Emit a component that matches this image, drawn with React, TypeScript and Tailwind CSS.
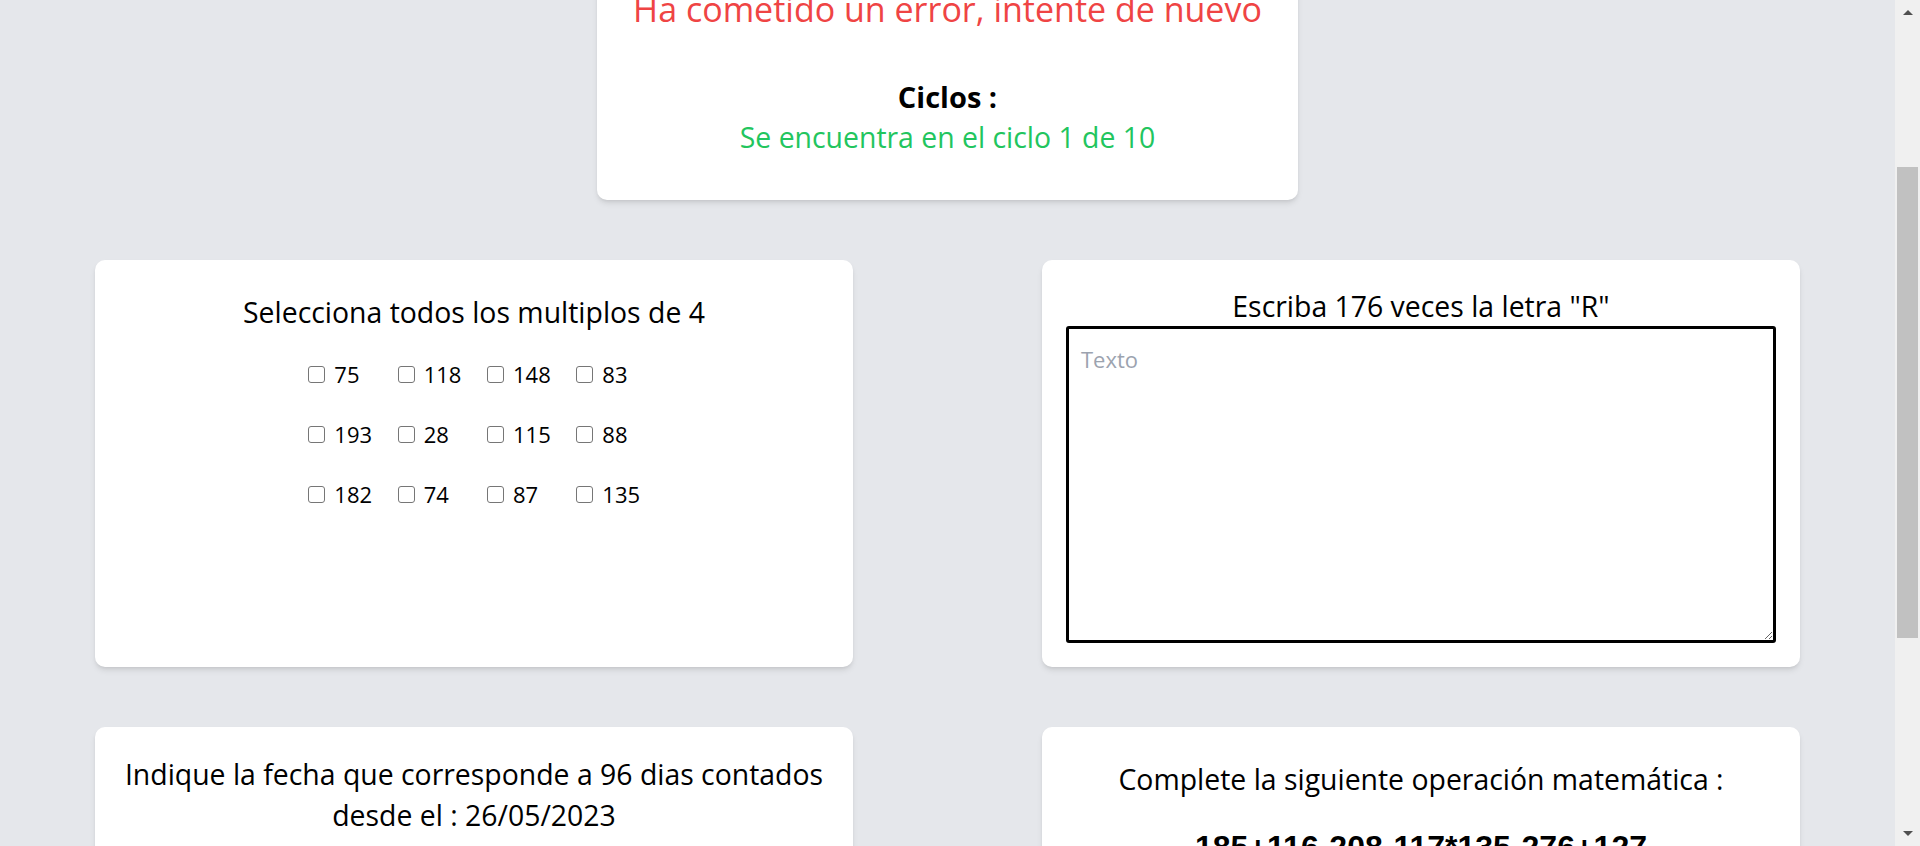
import React from "react";

const rows = [
  ["75", "118", "148", "83"],
  ["193", "28", "115", "88"],
  ["182", "74", "87", "135"],
];

function Box({ label }: { label: string }) {
  return (
    <label className="flex h-[35px] items-center gap-[9px]">
      <input
        type="checkbox"
        className="h-[17px] w-[17px] shrink-0 appearance-none rounded-[3px] border-[1.25px] border-[#767676] bg-white"
      />
      <span className="text-[22px] leading-[35px] text-black">{label}</span>
    </label>
  );
}

export default function App() {
  return (
    <div className="flex h-[846px] w-[1920px] overflow-hidden bg-[#e5e7eb] font-['Open_Sans',sans-serif] text-black">
      <main className="flex min-w-0 flex-1 flex-col overflow-hidden">
        <div className="mx-auto mt-[-53px] w-[701px] shrink-0 rounded-[10px] bg-white pb-[43px] pt-[40px] text-center shadow-md">
          <p className="text-[34px] leading-[45px] text-[#ef4444]">Ha cometido un error, intente de nuevo</p>
          <p className="mt-[45px] text-[29px] font-bold leading-[40px]">Ciclos :</p>
          <p className="text-[28.4px] leading-[40px] text-[#22c55e]">Se encuentra en el ciclo 1 de 10</p>
        </div>

        <div className="mt-[60px] grid shrink-0 grid-cols-2 gap-x-[189px] gap-y-[60px] px-[95px]">
          <section className="rounded-[10px] bg-white px-6 pt-[32px] shadow-md">
            <h2 className="text-center text-[28.4px] leading-[40px]">Selecciona todos los multiplos de 4</h2>
            <div className="mt-[25px] flex justify-center pl-[26px]">
              <div className="grid grid-cols-[repeat(4,89.33px)] gap-y-[25px]">
                {rows.flat().map((n) => (
                  <Box key={n} label={n} />
                ))}
              </div>
            </div>
          </section>

          <section className="rounded-[10px] bg-white px-6 pb-6 pt-[26px] shadow-md">
            <h2 className="text-center text-[28.4px] leading-[40px]">Escriba 176 veces la letra "R"</h2>
            <textarea
              placeholder="Texto"
              className="block h-[317px] w-full rounded-[3px] border-[3px] border-black bg-white px-[12px] py-[13px] text-[22px] leading-[35px] outline-none placeholder:text-[#9ca3af]"
            />
          </section>

          <section className="h-[200px] rounded-[10px] bg-white px-[20px] pt-[27px] text-center shadow-md">
            <p className="text-[28.4px] leading-[41px]">
              Indique la fecha que corresponde a 96 dias contados
              <br />
              desde el : 26/05/2023
            </p>
          </section>

          <section className="h-[200px] rounded-[10px] bg-white px-6 pt-[32px] text-center shadow-md">
            <p className="text-[28.4px] leading-[40px]">Complete la siguiente operación matemática :</p>
            <p className="mt-[28px] font-['Liberation_Sans',Arial,sans-serif] text-[32px] font-bold leading-[40px]">
              185+116-208-117*135-276+127
            </p>
          </section>
        </div>
      </main>

      <aside className="flex w-[25px] shrink-0 flex-col bg-[#f0f0f0]">
        <div className="flex h-[25px] shrink-0 items-center justify-center">
          <svg width="10" height="5" viewBox="0 0 10 5">
            <polygon points="0,5 5,0 10,5" fill="#505050" />
          </svg>
        </div>
        <div className="h-[142px] shrink-0" />
        <div className="mx-[2px] h-[471px] shrink-0 bg-[#c1c1c1]" />
        <div className="flex-1" />
        <div className="flex h-[25px] shrink-0 items-center justify-center">
          <svg width="10" height="5" viewBox="0 0 10 5">
            <polygon points="0,0 10,0 5,5" fill="#505050" />
          </svg>
        </div>
      </aside>
    </div>
  );
}
